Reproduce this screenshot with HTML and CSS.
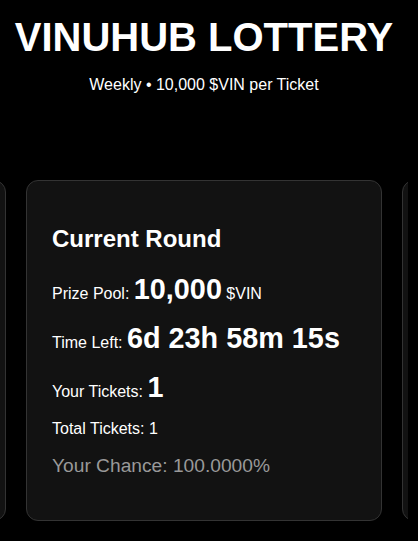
FILE: index.html
```html
<!DOCTYPE html>
<html>
<head>
<meta charset="utf-8">
<link rel="stylesheet" href="styles.css">
</head>
<body>
<div class="page">
  <header class="hero">
    <h1 class="title">VINUHUB LOTTERY</h1>
    <p class="subtitle">Weekly • 10,000 $VIN per Ticket</p>
  </header>
  <div class="carousel">
    <div class="card side"></div>
    <section class="card">
      <h2 class="card-title">Current Round</h2>
      <p class="row">Prize Pool: <span class="big">10,000</span> $VIN</p>
      <p class="row">Time Left: <span class="big">6d 23h 58m 15s</span></p>
      <p class="row">Your Tickets: <span class="big">1</span></p>
      <p class="row">Total Tickets: 1</p>
      <p class="chance">Your Chance: 100.0000%</p>
    </section>
    <div class="card side"></div>
  </div>
</div>
</body>
</html>
```
FILE: styles.css
```css
html, body {
  margin: 0;
  padding: 0;
  background: #000;
  color: #fff;
  font-family: "Liberation Sans", Arial, sans-serif;
  overflow: hidden;
}
.page {
  width: 408px;
}
.hero {
  text-align: center;
  padding-top: 14px;
}
.title {
  margin: 0;
  font-size: 40px;
  font-weight: bold;
  line-height: 46px;
}
.subtitle {
  margin: 16px 0 0;
  font-size: 16px;
  line-height: 18px;
}
.carousel {
  display: flex;
  justify-content: center;
  gap: 20px;
  margin-top: 86px;
  overflow: hidden;
}
.card {
  flex: 0 0 356px;
  box-sizing: border-box;
  background: #121212;
  border: 1px solid #333;
  border-radius: 12px;
  padding: 24px 25px;
}
.card-title {
  margin: 20px 0 20px;
  font-size: 24px;
  font-weight: bold;
}
.row {
  margin: 16px 0;
  font-size: 16px;
}
.big {
  font-size: 28.8px;
  font-weight: bold;
}
.chance {
  margin: 17px 0 19px;
  font-size: 19.2px;
  color: #999;
}
```
